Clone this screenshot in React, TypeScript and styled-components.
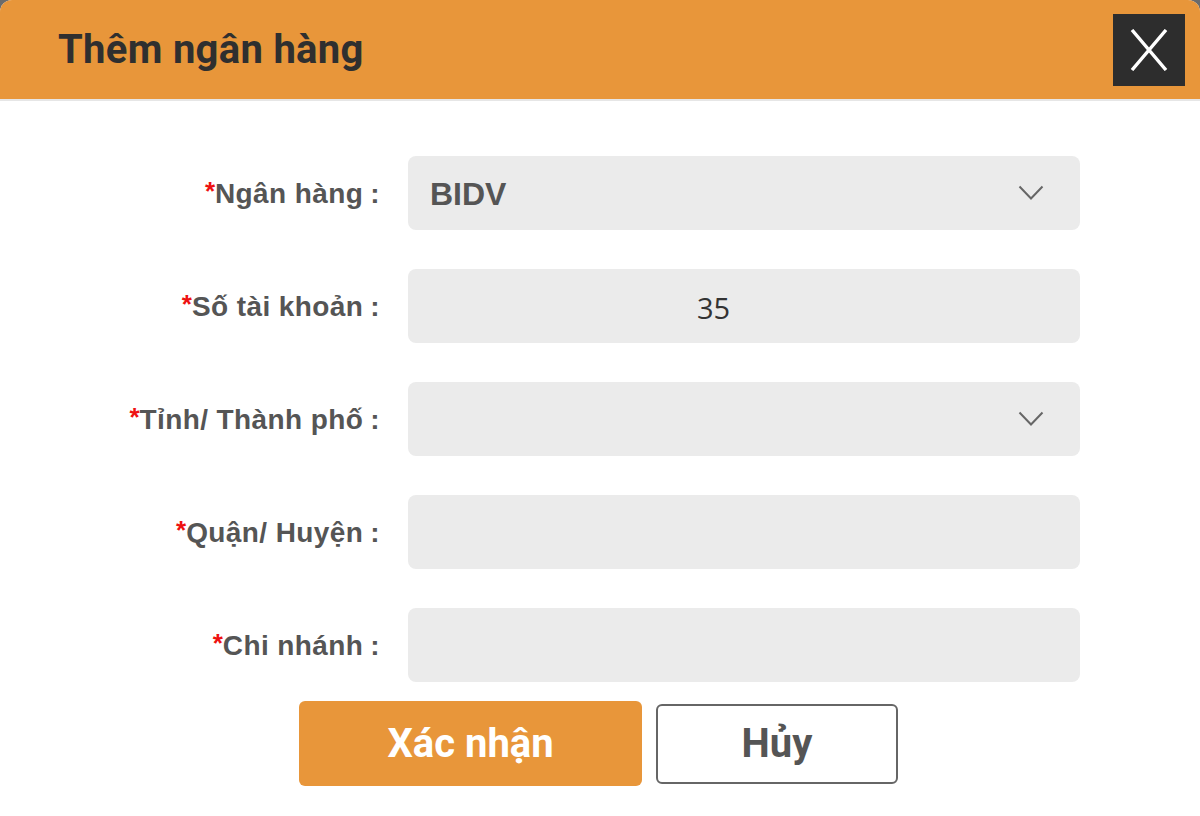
import React from 'react';
import styled, { createGlobalStyle } from 'styled-components';

const GlobalStyle = createGlobalStyle`
  html, body {
    margin: 0;
    padding: 0;
    background: #6b6b6b;
  }
  * {
    box-sizing: border-box;
  }
`;

const Modal = styled.div`
  width: 1200px;
  height: 816px;
  background: #ffffff;
  border-radius: 12px 12px 0 0;
  overflow: hidden;
  display: flex;
  flex-direction: column;
`;

const Header = styled.div`
  height: 101px;
  background: #e8963a;
  border-bottom: 2px solid #e6e6e6;
  display: flex;
  align-items: center;
  justify-content: space-between;
  padding: 0 15px 0 58px;

  h1 {
    margin: 0;
    font-family: Roboto, 'Liberation Sans', sans-serif;
    font-size: 40px;
    font-weight: 700;
    color: #2f2f2f;
    letter-spacing: 0.3px;
  }
`;

const CloseBtn = styled.button`
  width: 72px;
  height: 72px;
  background: #2d2d2d;
  border: none;
  padding: 0;
  display: flex;
  align-items: center;
  justify-content: center;
  cursor: pointer;
  margin-top: 1px;
`;

const Form = styled.div`
  display: flex;
  flex-direction: column;
  gap: 39px;
  padding-top: 55px;
`;

const Row = styled.div`
  display: grid;
  grid-template-columns: 380px 672px;
  column-gap: 28px;
  align-items: center;
`;

const Label = styled.label`
  text-align: right;
  font-family: 'Liberation Sans', Arial, sans-serif;
  font-size: 28px;
  font-weight: 700;
  color: #555555;
  letter-spacing: 0.4px;
  white-space: nowrap;

  em {
    font-style: normal;
    color: #ee1111;
    font-size: 26px;
    vertical-align: 3px;
    letter-spacing: 0;
  }

  i {
    font-style: normal;
    margin-left: 7px;
  }
`;

const Field = styled.div`
  height: 74px;
  background: #ebebeb;
  border-radius: 8px;
  display: flex;
  align-items: center;
  justify-content: space-between;
  padding: 0 36px 0 22px;
`;

const Value = styled.span<{ $bold?: boolean }>`
  font-family: ${({ $bold }) =>
    $bold ? "'Liberation Sans', Arial, sans-serif" : "'Open Sans', 'Noto Sans', sans-serif"};
  font-size: ${({ $bold }) => ($bold ? '32px' : '29px')};
  font-weight: ${({ $bold }) => ($bold ? 700 : 400)};
  color: ${({ $bold }) => ($bold ? '#555555' : '#333333')};
  display: flex;
  align-items: center;
  padding-top: 2px;
`;

const Masked = styled.span<{ $w: number }>`
  display: inline-block;
  width: ${({ $w }) => $w}px;
`;

const Actions = styled.div`
  display: flex;
  justify-content: center;
  align-items: center;
  gap: 14px;
  padding-top: 19px;
  padding-right: 3px;
`;

const ConfirmBtn = styled.button`
  width: 343px;
  height: 85px;
  background: #e8963a;
  border: none;
  border-radius: 6px;
  color: #ffffff;
  font-family: Roboto, 'Liberation Sans', sans-serif;
  font-size: 40px;
  font-weight: 700;
  cursor: pointer;
`;

const CancelBtn = styled.button`
  width: 242px;
  height: 80px;
  background: #ffffff;
  border: 2px solid #666666;
  border-radius: 6px;
  color: #555555;
  font-family: Roboto, 'Liberation Sans', sans-serif;
  font-size: 40px;
  font-weight: 700;
  cursor: pointer;
`;

const Chevron = () => (
  <svg width="26" height="16" viewBox="0 0 26 16" fill="none">
    <path d="M1.5 1.5 L13 13.5 L24.5 1.5" stroke="#666" strokeWidth="2" />
  </svg>
);

const CloseIcon = () => (
  <svg width="38" height="42" viewBox="0 0 38 42" fill="none">
    <path d="M2 1 L36 41 M36 1 L2 41" stroke="#fff" strokeWidth="3.4" />
  </svg>
);

interface FieldDef {
  label: string;
  value?: string;
  bold?: boolean;
  mask?: number;
  select?: boolean;
}

const fields: FieldDef[] = [
  { label: 'Ngân hàng', value: 'BIDV', bold: true, select: true },
  { label: 'Số tài khoản', value: '35', mask: 267 },
  { label: 'Tỉnh/ Thành phố', select: true },
  { label: 'Quận/ Huyện' },
  { label: 'Chi nhánh' },
];

const App: React.FC = () => {
  return (
    <>
      <GlobalStyle />
      <Modal>
        <Header>
          <h1>Thêm ngân hàng</h1>
          <CloseBtn aria-label="close">
            <CloseIcon />
          </CloseBtn>
        </Header>
        <Form>
          {fields.map((f) => (
            <Row key={f.label}>
              <Label>
                <em>*</em>
                {f.label}
                <i>:</i>
              </Label>
              <Field>
                <Value $bold={f.bold}>
                  {f.mask ? <Masked $w={f.mask} /> : null}
                  {f.value ?? ''}
                </Value>
                {f.select && <Chevron />}
              </Field>
            </Row>
          ))}
        </Form>
        <Actions>
          <ConfirmBtn>Xác nhận</ConfirmBtn>
          <CancelBtn>Hủy</CancelBtn>
        </Actions>
      </Modal>
    </>
  );
};

export default App;
